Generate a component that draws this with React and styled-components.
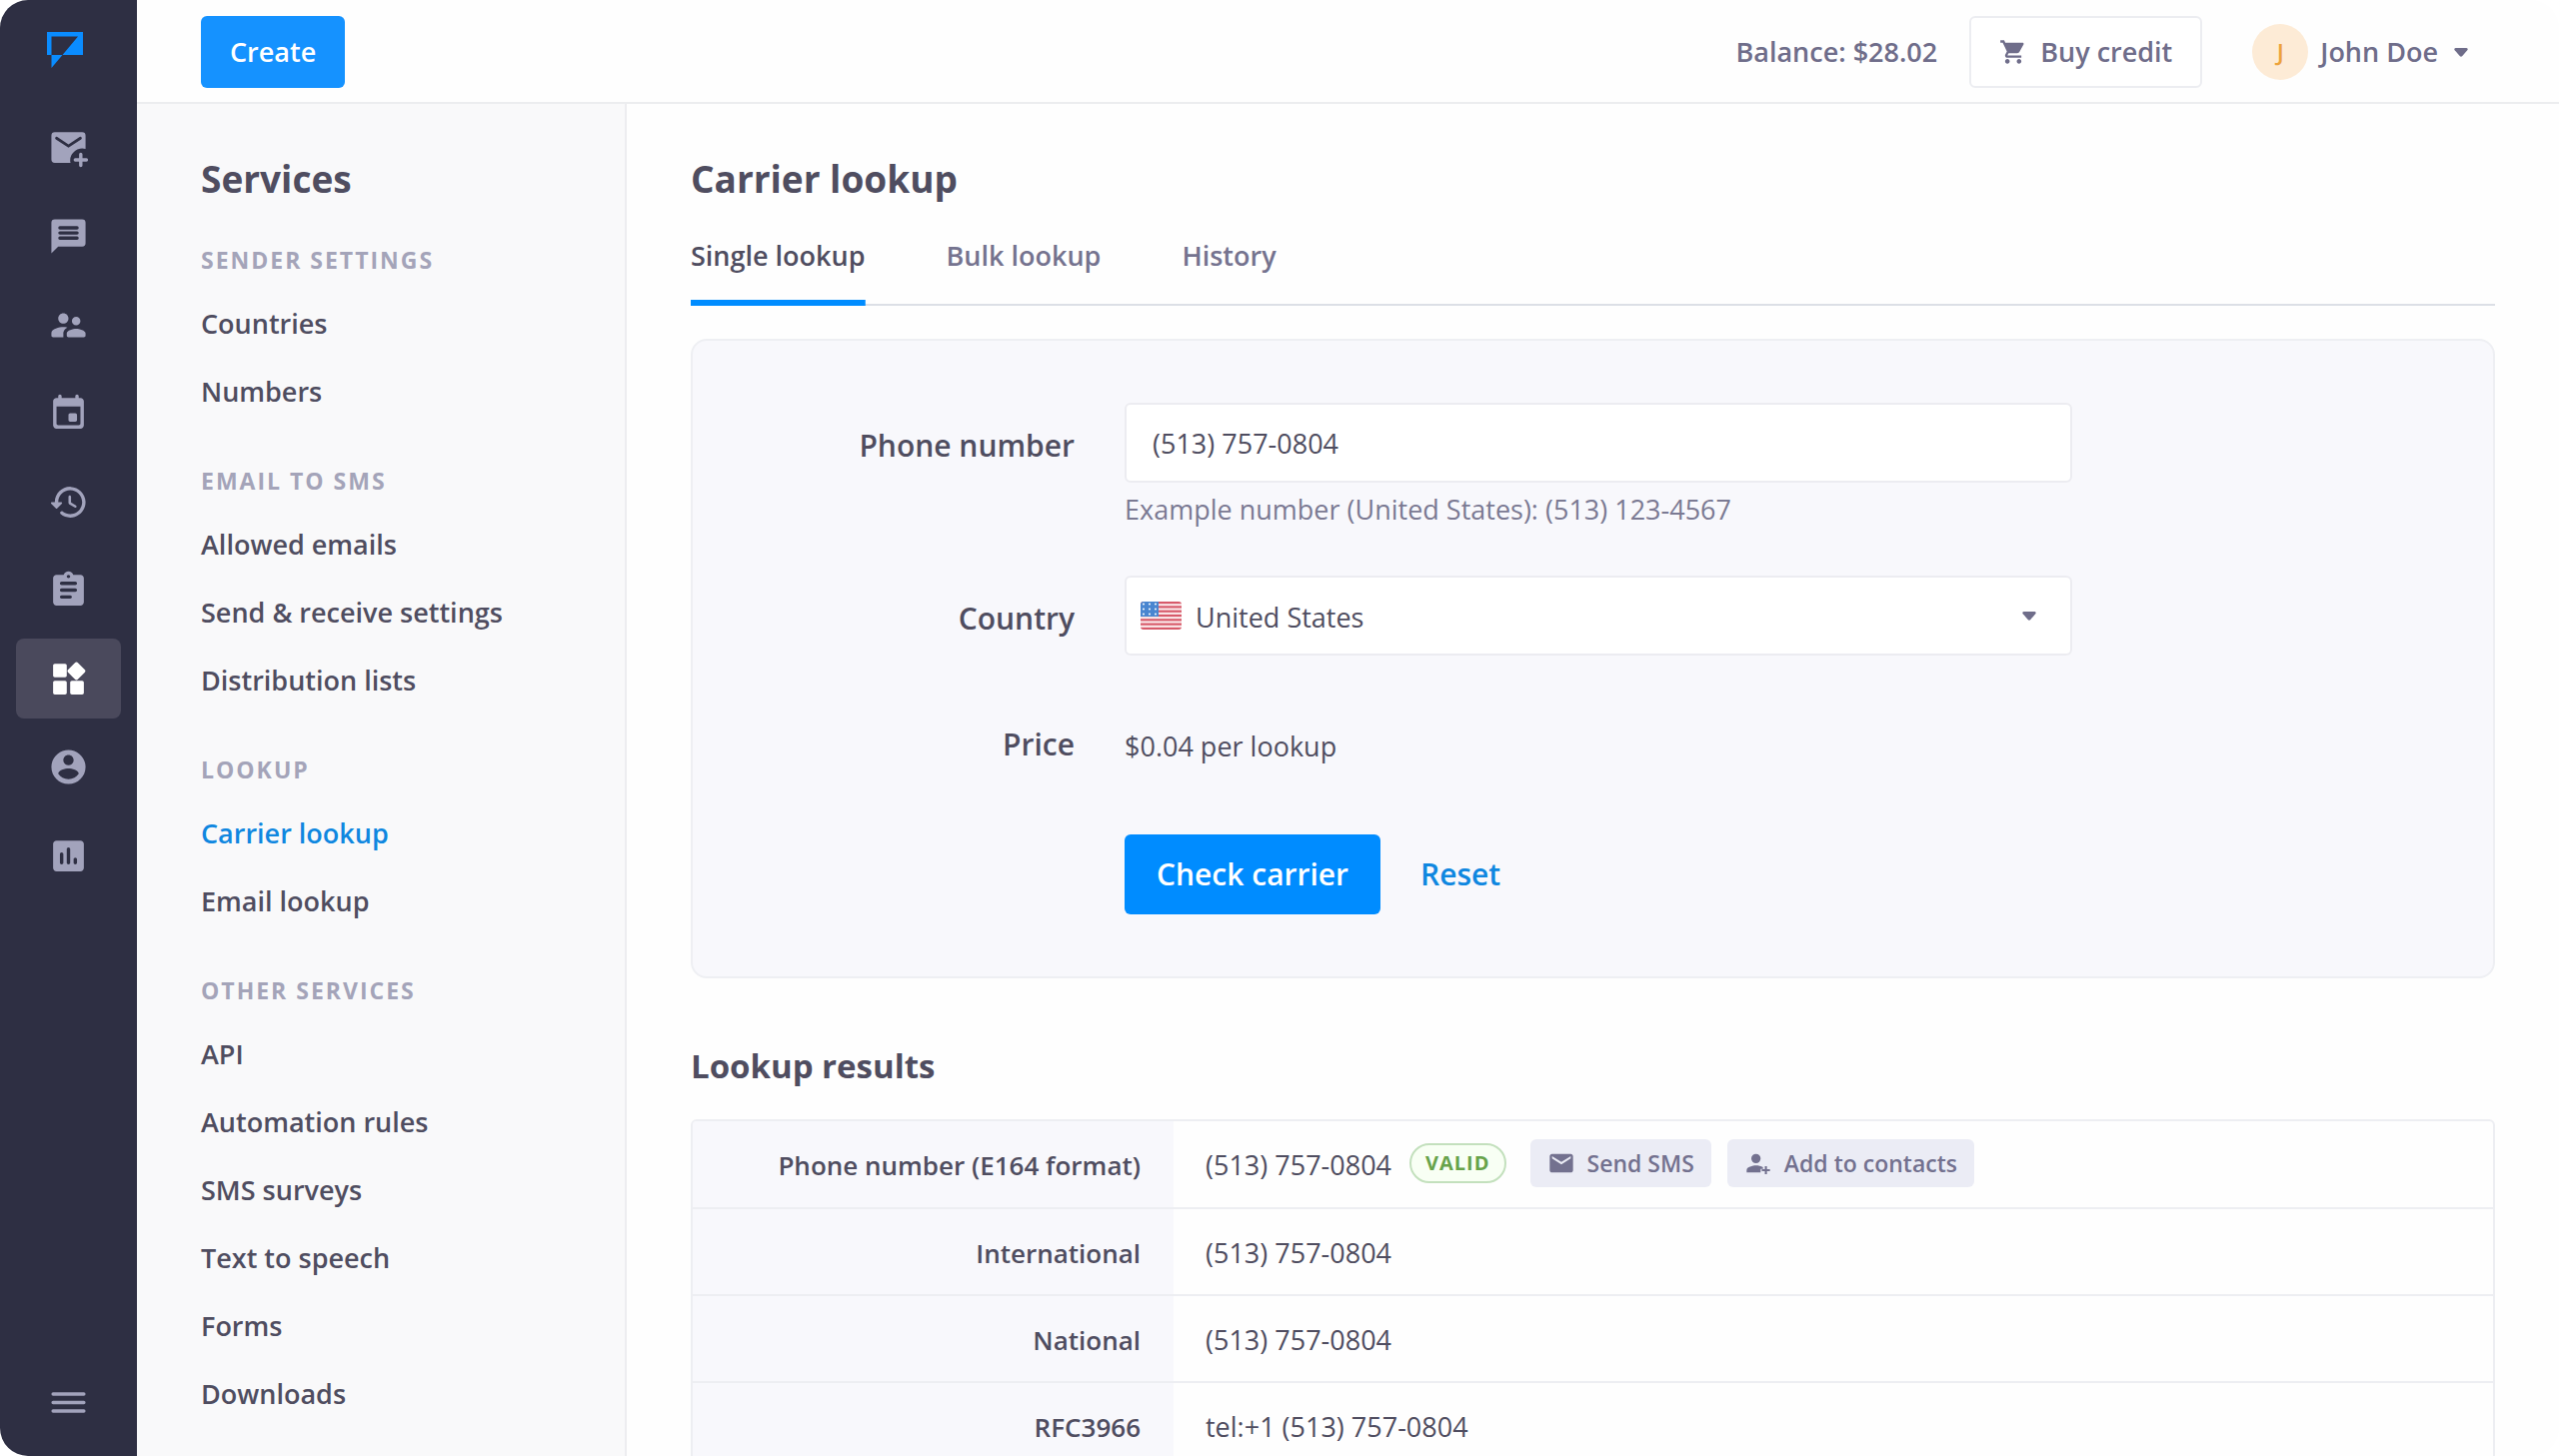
import React, { useState } from 'react';
import styled, { createGlobalStyle } from 'styled-components';

const GlobalStyle = createGlobalStyle`
    * {
        box-sizing: border-box;
    }

    body {
        margin: 0;
        background: #ffffff;
        color: #4f4d60;
        font-family: "Segoe UI", "Open Sans", "Noto Sans", sans-serif;
        font-size: 27px;
        line-height: 36px;
    }

    button, input, select {
        margin: 0;
        font: inherit;
        color: inherit;
    }

    h1, h2, h3, p, ul {
        margin: 0;
        padding: 0;
    }

    a {
        color: inherit;
        text-decoration: none;
    }
`

const Page = styled.div`
    display: flex;
    height: 100vh;
    overflow: hidden;
    border-radius: 28px;
    background: #fefefe;
`

const Rail = styled.nav`
    display: flex;
    flex-direction: column;
    align-items: center;
    flex: none;
    width: 137px;
    padding: 32px 16px;
    background: #2e2f43;
`

const LogoLink = styled.a`
    display: block;
    height: 36px;
    margin: 0 8px 40px 0;

    svg {
        display: block;
    }
`

const RailItems = styled.div`
    display: flex;
    flex-direction: column;
    justify-content: space-between;
    width: 100%;
    height: 788px;
`

const RailButton = styled.button`
    display: flex;
    align-items: center;
    justify-content: center;
    width: 100%;
    height: 80px;
    padding: 0;
    border: 0;
    border-radius: 8px;
    background: ${props => props.$active ? '#4a495c' : 'transparent'};
    color: ${props => props.$active ? '#ffffff' : '#a2a3bc'};
    cursor: pointer;
`

const RailFooter = styled.div`
    width: 100%;
    margin-top: auto;
    margin-bottom: -18px;
`

const Body = styled.div`
    display: flex;
    flex-direction: column;
    flex: 1;
    min-width: 0;
`

const Topbar = styled.header`
    display: flex;
    align-items: center;
    flex: none;
    height: 104px;
    padding: 2px 91px 0 64px;
    border-bottom: 2px solid #ecedef;
`

const Button = styled.button`
    height: ${props => props.$large ? '80px' : '72px'};
    padding: 0 ${props => props.$large ? '32px' : '29px'};
    border: 0;
    border-radius: 6px;
    background: ${props => props.$large ? '#008cff' : '#1592ff'};
    color: #ffffff;
    font-size: ${props => props.$large ? '30px' : '27px'};
    font-weight: 600;
    cursor: pointer;
`

const Account = styled.div`
    display: flex;
    align-items: center;
    margin-left: auto;
    color: #6f6d8a;
    font-weight: 600;
`

const BuyButton = styled.button`
    display: flex;
    align-items: center;
    gap: 13px;
    height: 72px;
    margin: 0 50px 0 32px;
    padding: 0 28px;
    border: 2px solid #ecedf1;
    border-radius: 6px;
    background: #ffffff;
    cursor: pointer;
`

const UserButton = styled.button`
    display: flex;
    align-items: center;
    gap: 12px;
    padding: 0;
    border: 0;
    background: none;
    cursor: pointer;

    svg {
        margin-left: 4px;
    }
`

const Avatar = styled.span`
    display: flex;
    align-items: center;
    justify-content: center;
    width: 56px;
    height: 56px;
    border-radius: 50%;
    background: #fdebd6;
    color: #eda33b;
    font-size: 24px;
`

const Columns = styled.div`
    display: flex;
    flex: 1;
    min-height: 0;
`

const Services = styled.aside`
    flex: none;
    width: 490px;
    padding: 48px 64px;
    border-right: 2px solid #ededf0;
    background: #f9f9fa;
`

const Title = styled.h1`
    font-size: 37px;
    font-weight: 700;
    line-height: 54px;
`

const ServicesTitle = styled(Title).attrs({ as: 'h2' })``

const GroupTitle = styled.h3`
    margin-top: ${props => props.$first ? '36px' : '37px'};
    color: #a4a4b9;
    font-size: 23px;
    font-weight: 700;
    letter-spacing: 2px;
    line-height: 36px;
    text-transform: uppercase;
`

const GroupList = styled.ul`
    padding-top: 12px;
    list-style: none;
`

const ServiceLink = styled.a`
    display: flex;
    align-items: center;
    height: 68px;
    color: ${props => props.$active ? '#0f87e0' : 'inherit'};
    font-weight: 600;
`

const Main = styled.main`
    flex: 1;
    min-width: 0;
    padding: 48px 64px 0;
    overflow: hidden;
`

const Tabs = styled.div`
    display: flex;
    gap: 81px;
    margin-top: 27px;
    border-bottom: 2px solid #dcdfe6;
`

const Tab = styled.button`
    height: 73px;
    margin-bottom: -2px;
    padding: 0 0 27px;
    border: 0;
    background: linear-gradient(#008cff, #008cff) bottom / ${props => props.$active ? '100%' : '0'} 6px no-repeat;
    color: ${props => props.$active ? '#4f4d60' : '#75738f'};
    font-weight: 600;
    cursor: pointer;
`

const LookupForm = styled.form`
    display: grid;
    grid-template-columns: 382px minmax(0, 948px);
    column-gap: 50px;
    margin-top: 33px;
    padding: 62px 0;
    border: 2px solid #eeeff3;
    border-radius: 16px;
    background: #f8f8fc;
`

const FieldLabel = styled.label`
    padding-top: 21px;
    font-size: 30px;
    font-weight: 600;
    line-height: 44px;
    text-align: right;
`

const Field = styled.div`
    min-height: ${props => props.$height};
`

const TextInput = styled.input`
    display: block;
    width: 100%;
    height: 80px;
    padding: 0 26px;
    border: 2px solid #ececf1;
    border-radius: 6px;
    background: #ffffff;
    outline: 0;
`

const Hint = styled.p`
    margin-top: 9px;
    color: #7b7a93;
`

const SelectBox = styled.div`
    display: flex;
    align-items: center;
    height: 80px;
    padding: 0 34px 0 14px;
    border: 2px solid #ececf1;
    border-radius: 6px;
    background: #ffffff;
    color: #6f6d8a;
`

const Select = styled.select`
    flex: 1;
    height: 100%;
    margin-left: 14px;
    padding-top: 3px;
    border: 0;
    background: transparent;
    color: #4f4d60;
    appearance: none;
    outline: 0;
`

const PriceText = styled.output`
    display: block;
    padding-top: 27px;
`

const Actions = styled.div`
    display: flex;
    grid-column: 2;
    align-items: center;
    gap: 40px;
`

const ResetButton = styled.button`
    padding: 0;
    border: 0;
    background: none;
    color: #0f87e0;
    font-size: 30px;
    font-weight: 600;
    cursor: pointer;
`

const ResultsTitle = styled.h2`
    margin-top: 64px;
    font-size: 33px;
    font-weight: 700;
    line-height: 48px;
`

const TableBox = styled.div`
    margin-top: 29px;
    border: 2px solid #edeef2;
    border-radius: 6px;
    overflow: hidden;
`

const Table = styled.table`
    width: 100%;
    border-collapse: collapse;

    tr + tr {
        border-top: 2px solid #edeef2;
    }

    th {
        width: 481px;
        height: 87px;
        padding: 2px 33px 0 0;
        background: #f8f8fc;
        font-size: 26px;
        font-weight: 600;
        text-align: right;
    }

    td {
        padding: 2px 32px 0;
    }
`

const PhoneCell = styled.div`
    display: flex;
    align-items: center;
`

const Badge = styled.span`
    height: 40px;
    margin: 0 24px 4px 18px;
    padding: 0 14px;
    border: 2px solid #c3e0bd;
    border-radius: 20px;
    background: #f8fff4;
    color: #68a34b;
    font-size: 20px;
    font-weight: 700;
    letter-spacing: 1px;
    line-height: 36px;
`

const SmallButton = styled.button`
    display: flex;
    align-items: center;
    gap: 12px;
    height: 48px;
    margin: 0 16px 4px 0;
    padding: 0 17px;
    border: 0;
    border-radius: 6px;
    background: #ebecf5;
    color: #73718f;
    font-size: 23px;
    font-weight: 600;
    cursor: pointer;
`

const Icon = ({ size = 41, children }) => (
    <svg width={size} height={size} viewBox="0 0 24 24" fill="currentColor" aria-hidden="true">
        {children}
    </svg>
);

const Logo = () => (
    <svg width="36" height="36" viewBox="0 0 36 36" fill="#0a8cff" aria-hidden="true">
        <path fillRule="evenodd" d="M0 0H36V23H15.5L31 4.500H4.500V23H0Z" />
        <path d="M4.500 23H15.500L4.500 36Z" />
    </svg>
);

const Caret = () => (
    <svg width="14" height="9" viewBox="0 0 14 9" fill="currentColor" aria-hidden="true">
        <path d="M1.500 0H12.500Q14.500 .6 13.300 2.200L8.300 8Q7 9.400 5.700 8L.7 2.200Q-.5 .6 1.500 0Z" />
    </svg>
);

const Flag = () => (
    <svg width="41" height="28" viewBox="0 0 41 28" aria-hidden="true">
        <clipPath id="flag-shape"><rect width="41" height="28" rx="3" /></clipPath>
        <g clipPath="url(#flag-shape)">
            <rect width="41" height="28" fill="#fbe9ea" />
            {[0, 1, 2, 3, 4, 5, 6].map(i => (
                <rect key={i} y={i * 4.31} width="41" height="2.15" fill="#d75a6a" />
            ))}
            <rect width="18" height="15" fill="#4a86d0" />
            {[2.5, 7.5, 12.5].map(y => [3, 9, 15].map(x => (
                <circle key={`${x}-${y}`} cx={x} cy={y} r="1" fill="#ffffff" />
            )))}
        </g>
    </svg>
);

const railItems = [
    { label: 'New message', icon: (
        <>
            <path d="M4 2.500H20a2 2 0 0 1 2 2V12.300a7 7 0 0 0-9 6.700c0 .5 0 1 .2 1.500H4a2 2 0 0 1-2-2v-14a2 2 0 0 1 2-2z" />
            <path d="M5 6l7 4.600L19 6" fill="none" stroke="#2e2f43" strokeWidth="1.600" strokeLinecap="round" />
            <path d="M19.200 15.500v6.500M16 18.700h6.500" stroke="currentColor" strokeWidth="2" strokeLinecap="round" />
        </>
    ) },
    { label: 'Chats', icon: (
        <>
            <path d="M4 2h16a2 2 0 0 1 2 2v12a2 2 0 0 1-2 2H6l-4 4V4a2 2 0 0 1 2-2z" />
            <path d="M7 7h10M7 10h10M7 13h10" stroke="#2e2f43" strokeWidth="2" strokeLinecap="round" />
        </>
    ) },
    { label: 'Contacts', icon: (
        <path d="M16.500 12c1.380 0 2.490-1.120 2.490-2.500S17.880 7 16.500 7 14 8.120 14 9.500s1.120 2.500 2.500 2.500zM9 11c1.660 0 2.990-1.340 2.990-3S10.660 5 9 5 6 6.340 6 8s1.340 3 3 3zm7.500 3c-1.830 0-5.500.92-5.500 2.750V18c0 .55.45 1 1 1h9c.55 0 1-.45 1-1v-1.250c0-1.830-3.670-2.750-5.500-2.750zM9 13c-2.330 0-7 1.170-7 3.500V18c0 .55.45 1 1 1h6v-2.250c0-.85.33-2.340 2.370-3.470C10.500 13.100 9.660 13 9 13z" />
    ) },
    { label: 'Calendar', icon: (
        <path d="M16 12h-3c-.55 0-1 .45-1 1v3c0 .55.45 1 1 1h3c.55 0 1-.45 1-1v-3c0-.55-.45-1-1-1zm0-10v1H8V2c0-.55-.45-1-1-1s-1 .45-1 1v1H5c-1.110 0-1.990.9-1.990 2L3 19c0 1.100.89 2 2 2h14c1.100 0 2-.9 2-2V5c0-1.100-.9-2-2-2h-1V2c0-.55-.45-1-1-1s-1 .45-1 1zm2 17H6c-.55 0-1-.45-1-1V8h14v10c0 .55-.45 1-1 1z" />
    ) },
    { label: 'History', icon: (
        <path d="M13.260 3C8.170 2.860 4 6.950 4 12H2.210c-.45 0-.67.54-.35.85l2.790 2.800c.2.200.51.200.71 0l2.790-2.800c.31-.31.090-.85-.36-.85H6c0-3.900 3.180-7.050 7.100-7 3.720.05 6.850 3.180 6.900 6.900.05 3.910-3.100 7.100-7 7.100-1.610 0-3.100-.55-4.280-1.480-.4-.31-.96-.28-1.320.080-.42.420-.39 1.130.080 1.490C9 20.290 10.910 21 13 21c5.050 0 9.140-4.170 9-9.260-.13-4.690-4.050-8.610-8.740-8.740zm-.51 5c-.41 0-.75.34-.75.75v3.680c0 .35.19.68.49.86l3.120 1.850c.36.210.82.090 1.030-.26.210-.36.090-.82-.26-1.030l-2.880-1.710v-3.400c0-.4-.34-.74-.75-.74z" />
    ) },
    { label: 'Templates', icon: (
        <path d="M19 3h-4.180C14.400 1.840 13.300 1 12 1s-2.400.84-2.820 2H5c-1.100 0-2 .9-2 2v14c0 1.100.9 2 2 2h14c1.100 0 2-.9 2-2V5c0-1.100-.9-2-2-2zm-7 0c.55 0 1 .45 1 1s-.45 1-1 1-1-.45-1-1 .45-1 1-1zm1 14H8c-.55 0-1-.45-1-1s.45-1 1-1h5c.55 0 1 .45 1 1s-.45 1-1 1zm3-4H8c-.55 0-1-.45-1-1s.45-1 1-1h8c.55 0 1 .45 1 1s-.45 1-1 1zm0-4H8c-.55 0-1-.45-1-1s.45-1 1-1h8c.55 0 1 .45 1 1s-.45 1-1 1z" />
    ) },
    { label: 'Services', active: true, icon: (
        <path d="M13 14v6c0 .55.45 1 1 1h6c.55 0 1-.45 1-1v-6c0-.55-.45-1-1-1h-6c-.55 0-1 .45-1 1zm-9 7h6c.55 0 1-.45 1-1v-6c0-.55-.45-1-1-1H4c-.55 0-1 .45-1 1v6c0 .55.45 1 1 1zM3 4v6c0 .55.45 1 1 1h6c.55 0 1-.45 1-1V4c0-.55-.45-1-1-1H4c-.55 0-1 .45-1 1zm12.950-1.600L11.700 6.640c-.39.39-.39 1.020 0 1.410l4.250 4.250c.39.390 1.020.390 1.410 0l4.250-4.250c.39-.39.39-1.020 0-1.410L17.370 2.400c-.39-.39-1.030-.39-1.420 0z" />
    ) },
    { label: 'Profile', icon: (
        <path d="M12 2C6.480 2 2 6.480 2 12s4.480 10 10 10 10-4.480 10-10S17.520 2 12 2zm0 3c1.660 0 3 1.340 3 3s-1.340 3-3 3-3-1.340-3-3 1.340-3 3-3zm0 14.200c-2.500 0-4.710-1.280-6-3.220.03-1.990 4-3.080 6-3.080 1.990 0 5.970 1.090 6 3.080-1.290 1.940-3.500 3.220-6 3.220z" />
    ) },
    { label: 'Reports', icon: (
        <path d="M19 3H5c-1.100 0-2 .9-2 2v14c0 1.100.9 2 2 2h14c1.100 0 2-.9 2-2V5c0-1.100-.9-2-2-2zM8 17c-.55 0-1-.45-1-1v-5c0-.55.45-1 1-1s1 .45 1 1v5c0 .55-.45 1-1 1zm4 0c-.55 0-1-.45-1-1V8c0-.55.45-1 1-1s1 .45 1 1v8c0 .55-.45 1-1 1zm4 0c-.55 0-1-.45-1-1v-2c0-.55.45-1 1-1s1 .45 1 1v2c0 .55-.45 1-1 1z" />
    ) },
];

const groups = [
    { title: 'Sender settings', links: ['Countries', 'Numbers'] },
    { title: 'Email to SMS', links: ['Allowed emails', 'Send & receive settings', 'Distribution lists'] },
    { title: 'Lookup', links: ['Carrier lookup', 'Email lookup'] },
    { title: 'Other services', links: ['API', 'Automation rules', 'SMS surveys', 'Text to speech', 'Forms', 'Downloads'] },
];

const tabs = ['Single lookup', 'Bulk lookup', 'History'];

const results = [
    ['International', '(513) 757-0804'],
    ['National', '(513) 757-0804'],
    ['RFC3966', 'tel:+1 (513) 757-0804'],
];

const Sidebar = () => (
    <Rail aria-label="Main">
        <LogoLink href="#" aria-label="Home"><Logo /></LogoLink>
        <RailItems>
            {railItems.map(item => (
                <RailButton key={item.label} $active={item.active} aria-label={item.label}>
                    <Icon>{item.icon}</Icon>
                </RailButton>
            ))}
        </RailItems>
        <RailFooter>
            <RailButton aria-label="Toggle menu">
                <Icon>
                    <path d="M3 7h18M3 12h18M3 17h18" stroke="currentColor" strokeWidth="2" strokeLinecap="round" />
                </Icon>
            </RailButton>
        </RailFooter>
    </Rail>
);

const Header = () => (
    <Topbar>
        <Button>Create</Button>
        <Account>
            <span>Balance: $28.02</span>
            <BuyButton>
                <Icon size={28}>
                    <path d="M7 18c-1.100 0-1.990.9-1.990 2S5.900 22 7 22s2-.9 2-2-.9-2-2-2zM1 2v2h2l3.600 7.590-1.350 2.450c-.16.280-.25.610-.25.960 0 1.100.9 2 2 2h12v-2H7.420c-.14 0-.25-.11-.25-.25l.03-.12.900-1.630h7.450c.75 0 1.410-.41 1.750-1.030l3.580-6.490c.080-.14.120-.31.120-.48 0-.55-.45-1-1-1H5.210l-.94-2H1zm16 16c-1.100 0-1.990.9-1.990 2s.89 2 1.990 2 2-.9 2-2-.9-2-2-2z" />
                </Icon>
                Buy credit
            </BuyButton>
            <UserButton>
                <Avatar>J</Avatar>
                John Doe
                <Caret />
            </UserButton>
        </Account>
    </Topbar>
);

const ServicesMenu = () => (
    <Services>
        <ServicesTitle>Services</ServicesTitle>
        {groups.map((group, index) => (
            <section key={group.title}>
                <GroupTitle $first={index === 0}>{group.title}</GroupTitle>
                <GroupList>
                    {group.links.map(link => (
                        <li key={link}>
                            <ServiceLink href="#" $active={link === 'Carrier lookup'}>{link}</ServiceLink>
                        </li>
                    ))}
                </GroupList>
            </section>
        ))}
    </Services>
);

const Lookup = () => {
    const [phone, setPhone] = useState('(513) 757-0804');

    return (
        <LookupForm onSubmit={e => e.preventDefault()}>
            <FieldLabel htmlFor="phone">Phone number</FieldLabel>
            <Field $height="173px">
                <TextInput id="phone" type="tel" value={phone} onChange={e => setPhone(e.target.value)} />
                <Hint>Example number (United States): (513) 123-4567</Hint>
            </Field>

            <FieldLabel htmlFor="country">Country</FieldLabel>
            <Field $height="126px">
                <SelectBox>
                    <Flag />
                    <Select id="country" defaultValue="us">
                        <option value="us">United States</option>
                    </Select>
                    <Caret />
                </SelectBox>
            </Field>

            <FieldLabel htmlFor="price">Price</FieldLabel>
            <Field $height="133px">
                <PriceText id="price">$0.04 per lookup</PriceText>
            </Field>

            <Actions>
                <Button $large>Check carrier</Button>
                <ResetButton type="button" onClick={() => setPhone('')}>Reset</ResetButton>
            </Actions>
        </LookupForm>
    );
}

const Results = () => (
    <TableBox>
        <Table>
            <tbody>
                <tr>
                    <th scope="row">Phone number (E164 format)</th>
                    <td>
                        <PhoneCell>
                            (513) 757-0804
                            <Badge>VALID</Badge>
                            <SmallButton>
                                <Icon size={28}>
                                    <path d="M20 4H4C2.900 4 2 4.900 2 6v12c0 1.100.9 2 2 2h16c1.100 0 2-.9 2-2V6c0-1.100-.9-2-2-2zm0 4l-8 5-8-5V6l8 5 8-5v2z" />
                                </Icon>
                                Send SMS
                            </SmallButton>
                            <SmallButton>
                                <Icon size={28}>
                                    <path d="M10 12a4 4 0 1 0 0-8 4 4 0 0 0 0 8zM10 14c-2.700 0-8 1.300-8 4v2h12v-3h2v-1.500c-1.600-1-4.200-1.500-6-1.500z" />
                                    <path d="M18.500 14.500v7M15 18h7" stroke="currentColor" strokeWidth="1.800" />
                                </Icon>
                                Add to contacts
                            </SmallButton>
                        </PhoneCell>
                    </td>
                </tr>
                {results.map(([label, value]) => (
                    <tr key={label}>
                        <th scope="row">{label}</th>
                        <td>{value}</td>
                    </tr>
                ))}
            </tbody>
        </Table>
    </TableBox>
);

export default function App() {
    const [tab, setTab] = useState(tabs[0]);

    return (
        <>
            <GlobalStyle />
            <Page>
                <Sidebar />
                <Body>
                    <Header />
                    <Columns>
                        <ServicesMenu />
                        <Main>
                            <Title>Carrier lookup</Title>
                            <Tabs role="tablist">
                                {tabs.map(name => (
                                    <Tab key={name} role="tab" aria-selected={tab === name} $active={tab === name} onClick={() => setTab(name)}>
                                        {name}
                                    </Tab>
                                ))}
                            </Tabs>
                            <Lookup />
                            <ResultsTitle>Lookup results</ResultsTitle>
                            <Results />
                        </Main>
                    </Columns>
                </Body>
            </Page>
        </>
    );
}
